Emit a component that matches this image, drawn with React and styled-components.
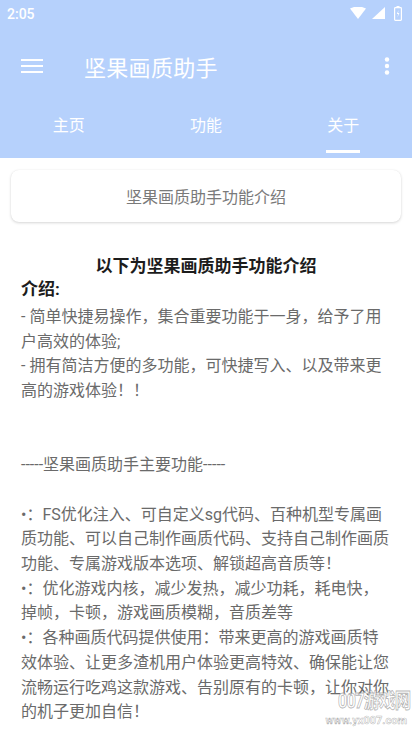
import styled, { createGlobalStyle } from "styled-components";

const GlobalStyle = createGlobalStyle`
  html, body {
    margin: 0;
    padding: 0;
    background: #ffffff;
  }
  body {
    font-family: Roboto, "Noto Sans CJK SC", sans-serif;
  }
`;

const HEADER = "#b6d1fc";

const paragraphs = [
  "- 简单快捷易操作，集合重要功能于一身，给予了用户高效的体验;",
  "- 拥有简洁方便的多功能，可快捷写入、以及带来更高的游戏体验！！",
  "",
  "",
  "-----坚果画质助手主要功能-----",
  "",
  "•：FS优化注入、可自定义sg代码、百种机型专属画质功能、可以自己制作画质代码、支持自己制作画质功能、专属游戏版本选项、解锁超高音质等！",
  "•：优化游戏内核，减少发热，减少功耗，耗电快，掉帧，卡顿，游戏画质模糊，音质差等",
  "•：各种画质代码提供使用：带来更高的游戏画质特效体验、让更多渣机用户体验更高特效、确保能让您流畅运行吃鸡这款游戏、告别原有的卡顿，让你对你的机子更加自信！",
];

const tabs = ["主页", "功能", "关于"];

const App = () => {
  return (
    <Page>
      <GlobalStyle />
      <Header>
        <StatusBar>
          <Clock>2:05</Clock>
          <StatusIcons>
            <svg width='16' height='12' viewBox='0 0 16 12'>
              <path d='M0 1.5 Q8 -2.5 16 1.5 L8 12 Z' fill='#fff' />
            </svg>
            <svg width='13' height='12' viewBox='0 0 13 12'>
              <path d='M13 0 L13 12 L0 12 Z' fill='#fff' />
            </svg>
            <svg width='8' height='15' viewBox='0 0 8 15'>
              <rect x='2.5' y='0' width='3' height='2' fill='#fff' />
              <rect x='0.6' y='1.6' width='6.8' height='12.8' rx='0.8' fill='none' stroke='#fff' strokeWidth='1.2' />
              <path d='M4.6 4 L2.8 8 L4.2 8 L3.4 11.5 L5.4 7 L4 7 Z' fill='#fff' />
            </svg>
          </StatusIcons>
        </StatusBar>
        <Toolbar>
          <IconButton aria-label='menu'>
            <svg width='22' height='16' viewBox='0 0 22 16'>
              <rect x='0' y='1' width='22' height='2' fill='#fff' />
              <rect x='0' y='7' width='22' height='2' fill='#fff' />
              <rect x='0' y='13' width='22' height='2' fill='#fff' />
            </svg>
          </IconButton>
          <Title>坚果画质助手</Title>
          <IconButton aria-label='more'>
            <svg width='6' height='18' viewBox='0 0 6 18'>
              <circle cx='3' cy='2.5' r='2.2' fill='#fff' />
              <circle cx='3' cy='9' r='2.2' fill='#fff' />
              <circle cx='3' cy='15.5' r='2.2' fill='#fff' />
            </svg>
          </IconButton>
        </Toolbar>
        <TabBar>
          {tabs.map((t, i) => (
            <Tab key={t}>
              <TabLabel>{t}</TabLabel>
              <Indicator $active={i === 2} />
            </Tab>
          ))}
        </TabBar>
      </Header>

      <Card>坚果画质助手功能介绍</Card>

      <Content>
        <Heading>以下为坚果画质助手功能介绍</Heading>
        <SubHeading>介绍:</SubHeading>
        {paragraphs.map((p, i) =>
          p ? <Para key={i}>{p}</Para> : <Blank key={i} />
        )}
      </Content>

      <Watermark>
        <Mark>007游戏网</Mark>
        <MarkUrl>www.yx007.com</MarkUrl>
      </Watermark>
    </Page>
  );
};

const Page = styled.div`
  position: relative;
  width: 412px;
  min-height: 732px;
  overflow: hidden;
`;

const Header = styled.header`
  background: ${HEADER};
  color: #fff;
`;

const StatusBar = styled.div`
  height: 28px;
  display: flex;
  align-items: center;
  justify-content: space-between;
  padding: 0 10px 0 7px;
  box-sizing: border-box;
`;

const Clock = styled.span`
  font-family: Roboto, sans-serif;
  font-size: 14px;
  font-weight: 500;
`;

const StatusIcons = styled.div`
  display: flex;
  align-items: center;
  gap: 6px;
  margin-top: -2px;
  svg:last-child {
    margin-left: 3px;
  }
`;

const Toolbar = styled.div`
  height: 76px;
  display: flex;
  align-items: center;
  padding: 0 22px 0 21px;
`;

const IconButton = styled.button`
  border: 0;
  background: none;
  padding: 0;
  display: flex;
  align-items: center;
  cursor: pointer;
`;

const Title = styled.h1`
  flex: 1;
  margin: 0 0 0 41px;
  font-size: 22px;
  font-weight: 400;
  letter-spacing: 0.3px;
  color: #fff;
`;

const TabBar = styled.nav`
  height: 54px;
  display: grid;
  grid-template-columns: repeat(3, 1fr);
`;

const Tab = styled.div`
  display: flex;
  flex-direction: column;
  align-items: center;
  padding-top: 12px;
  box-sizing: border-box;
`;

const TabLabel = styled.span`
  font-size: 16px;
  line-height: 20px;
  color: #fff;
`;

const Indicator = styled.span`
  margin-top: 14px;
  width: 34px;
  height: 3px;
  background: ${(p) => (p.$active ? "#fff" : "transparent")};
`;

const Card = styled.div`
  margin: 12px 11px 0;
  height: 52px;
  border-radius: 8px;
  background: #fff;
  box-shadow: 0 1px 3px rgb(0 0 0 / 0.16), 0 0 1px rgb(0 0 0 / 0.08);
  display: flex;
  align-items: center;
  justify-content: center;
  font-size: 16px;
  color: #7a7a7a;
`;

const Content = styled.section`
  padding: 33px 21px 0;
`;

const Heading = styled.h2`
  margin: 0;
  text-align: center;
  font-size: 17px;
  line-height: 23px;
  font-weight: 700;
  color: #1c1c1c;
`;

const SubHeading = styled.h3`
  margin: 0 0 4px;
  font-size: 17px;
  line-height: 23px;
  font-weight: 700;
  color: #1c1c1c;
`;

const Para = styled.p`
  margin: 0;
  font-size: 16px;
  line-height: 24.7px;
  color: #6a6a6a;
`;

const Blank = styled.div`
  height: 24.7px;
`;

const Watermark = styled.div`
  position: absolute;
  right: 2px;
  bottom: 5px;
  display: flex;
  flex-direction: column;
  align-items: flex-end;
  pointer-events: none;
`;

const Mark = styled.span`
  font-size: 20px;
  font-weight: 700;
  line-height: 22px;
  letter-spacing: -1px;
  color: rgb(255 255 255 / 0.55);
  -webkit-text-stroke: 0.8px rgb(130 130 130 / 0.6);
  transform: scaleX(0.82);
  transform-origin: right center;
`;

const MarkUrl = styled.span`
  font-size: 11px;
  font-weight: 700;
  line-height: 13px;
  margin-top: 2px;
  margin-right: 3px;
  color: rgb(255 255 255 / 0.6);
  -webkit-text-stroke: 0.5px rgb(130 130 130 / 0.6);
`;

export default App;
